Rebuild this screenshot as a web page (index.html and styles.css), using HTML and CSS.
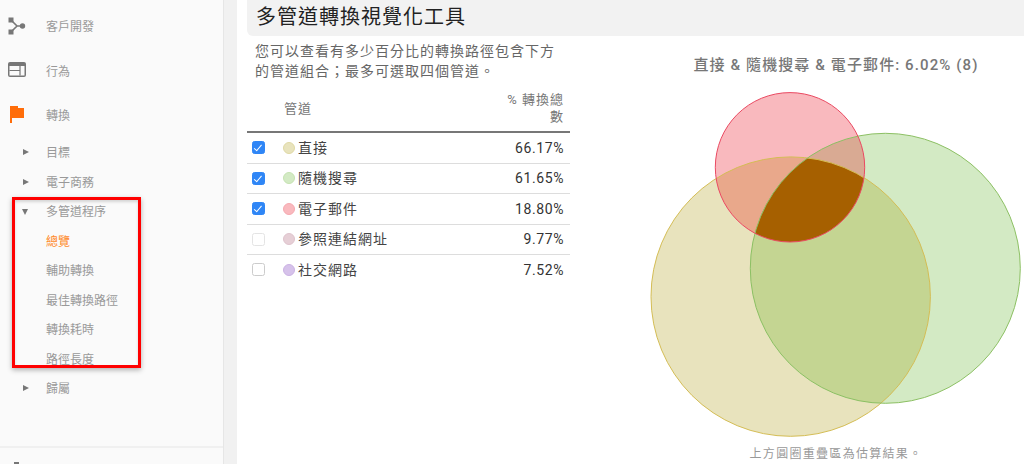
FILE: index.html
```html
<!DOCTYPE html>
<html lang="zh-Hant">
    <head>
        <title>多管道轉換視覺化工具</title>
        <meta charset="UTF-8"/>
        <link rel="stylesheet" href="styles.css">
    </head>
    <body>
        <nav class="sidebar">
            <div class="nav-top">
                <svg class="nav-icon" viewBox="0 0 18 18"><path d="M3 3 L9 9 L3 15 M9 9 H15" fill="none" stroke="#777" stroke-width="1.6"/><rect x="0.5" y="0.5" width="5" height="5" fill="#777"/><rect x="0.5" y="12.5" width="5" height="5" fill="#777"/><circle cx="14.5" cy="9" r="2.7" fill="#777"/></svg>
                <span>客戶開發</span>
            </div>
            <div class="nav-top">
                <svg class="nav-icon" viewBox="0 0 18 16"><rect x="0" y="0" width="18" height="15" rx="2" fill="#777"/><rect x="1.5" y="4" width="15" height="9.5" fill="#fafafa"/><path d="M1.5 8.5 H12 M12 4 V13.5" fill="none" stroke="#777" stroke-width="1.2"/></svg>
                <span>行為</span>
            </div>
            <div class="nav-top">
                <svg class="nav-icon" viewBox="0 0 18 18"><path d="M2 0 H10 V2 H16 V12 H4 V17 H2 Z" fill="#ff6d0a"/></svg>
                <span>轉換</span>
            </div>
            <div class="nav-sub"><i class="arrow"></i>目標</div>
            <div class="nav-sub"><i class="arrow"></i>電子商務</div>
            <div class="nav-sub"><i class="arrow-down"></i>多管道程序</div>
            <div class="nav-sub current">總覽</div>
            <div class="nav-sub">輔助轉換</div>
            <div class="nav-sub">最佳轉換路徑</div>
            <div class="nav-sub">轉換耗時</div>
            <div class="nav-sub">路徑長度</div>
            <div class="nav-sub"><i class="arrow"></i>歸屬</div>
            <div class="nav-footer"><i class="footer-icon"></i></div>
            <div class="red-box"></div>
        </nav>
        <div class="gutter"></div>
        <main class="content">
            <h1 class="title">多管道轉換視覺化工具</h1>
            <div class="columns">
                <section class="left">
                    <p class="desc">您可以查看有多少百分比的轉換路徑包含下方的管道組合；最多可選取四個管道。</p>
                    <table class="channels">
                        <thead>
                            <tr>
                                <th class="col-check"></th>
                                <th class="col-name">管道</th>
                                <th class="col-pct">% 轉換總數</th>
                            </tr>
                        </thead>
                        <tbody>
                            <tr>
                                <td><i class="check on"></i></td>
                                <td class="name"><i class="dot yellow"></i>直接</td>
                                <td class="pct">66.17%</td>
                            </tr>
                            <tr>
                                <td><i class="check on"></i></td>
                                <td class="name"><i class="dot green"></i>隨機搜尋</td>
                                <td class="pct">61.65%</td>
                            </tr>
                            <tr>
                                <td><i class="check on"></i></td>
                                <td class="name"><i class="dot red"></i>電子郵件</td>
                                <td class="pct">18.80%</td>
                            </tr>
                            <tr>
                                <td><i class="check faint"></i></td>
                                <td class="name"><i class="dot mauve"></i>參照連結網址</td>
                                <td class="pct">9.77%</td>
                            </tr>
                            <tr>
                                <td><i class="check"></i></td>
                                <td class="name"><i class="dot purple"></i>社交網路</td>
                                <td class="pct">7.52%</td>
                            </tr>
                        </tbody>
                    </table>
                </section>
                <section class="viz">
                    <h2 class="viz-title">直接 &amp; 隨機搜尋 &amp; 電子郵件: 6.02% (8)</h2>
                    <svg class="venn" viewBox="648 84 376 360">
                        <defs>
                            <clipPath id="clip-y"><circle cx="790.7" cy="296.6" r="139.7"/></clipPath>
                            <clipPath id="clip-g"><circle cx="885.3" cy="268.3" r="135"/></clipPath>
                        </defs>
                        <circle cx="790.7" cy="296.6" r="139.7" fill="#e8e3bd"/>
                        <circle cx="885.3" cy="268.3" r="135" fill="#d3eac4"/>
                        <circle cx="790" cy="167.3" r="74.7" fill="#f9b9be"/>
                        <g clip-path="url(#clip-y)">
                            <circle cx="885.3" cy="268.3" r="135" fill="#c4d592"/>
                            <circle cx="790" cy="167.3" r="74.7" fill="#e9a88b"/>
                        </g>
                        <g clip-path="url(#clip-g)">
                            <circle cx="790" cy="167.3" r="74.7" fill="#d9aa93"/>
                            <g clip-path="url(#clip-y)">
                                <circle cx="790" cy="167.3" r="74.7" fill="#a66000"/>
                            </g>
                        </g>
                        <circle cx="790.7" cy="296.6" r="139.7" fill="none" stroke="#d4bd55"/>
                        <circle cx="885.3" cy="268.3" r="135" fill="none" stroke="#8cc063"/>
                        <circle cx="790" cy="167.3" r="74.7" fill="none" stroke="#ea4a62"/>
                    </svg>
                    <p class="viz-note">上方圓圈重疊區為估算結果。</p>
                </section>
            </div>
        </main>
    </body>
</html>
```

FILE: styles.css
```css
html, body {
    height: 100%;
}

body {
    margin: 0;
    display: flex;
    height: 464px;
    overflow: hidden;
    background: #fff;
    font-family: Roboto, "Noto Sans CJK TC", sans-serif;
    color: #333;
}

/* sidebar */
.sidebar {
    position: relative;
    width: 224px;
    flex: none;
    display: flex;
    flex-direction: column;
    padding-top: 3.5px;
    box-sizing: border-box;
    background: #fafafa;
    border-right: 1px solid #e6e6e6;
    font-size: 12px;
    color: #999;
}

.nav-top {
    height: 44.5px;
    flex: none;
    display: flex;
    align-items: center;
    padding-left: 8px;
}

.nav-top span {
    margin-left: 20px;
}

.nav-icon {
    width: 18px;
    height: 18px;
    flex: none;
}

.nav-sub {
    height: 29.5px;
    flex: none;
    display: flex;
    align-items: center;
    padding-left: 46px;
    position: relative;
}

.nav-sub.current {
    color: #ff8a2b;
}

.arrow {
    position: absolute;
    left: 23px;
    top: 12px;
    border-left: 6px solid #777;
    border-top: 3.5px solid transparent;
    border-bottom: 3.5px solid transparent;
}

.arrow-down {
    position: absolute;
    left: 22px;
    top: 13px;
    border-top: 6px solid #777;
    border-left: 3.5px solid transparent;
    border-right: 3.5px solid transparent;
}

.nav-footer {
    margin-top: auto;
    height: 18px;
    flex: none;
    border-top: 2px solid #f0f0f0;
    box-sizing: border-box;
    padding: 14px 0 0 14px;
}

.footer-icon {
    display: block;
    width: 5px;
    height: 4px;
    background: #777;
}

.red-box {
    position: absolute;
    left: 12px;
    top: 197px;
    width: 129px;
    height: 171px;
    box-sizing: border-box;
    border: 3px solid #f00;
    box-shadow: 0 2px 5px rgba(0, 0, 0, 0.3), inset 0 2px 3px rgba(0, 0, 0, 0.15);
}

.gutter {
    width: 13px;
    flex: none;
    background: #f1f1f1;
}

/* main */
.content {
    flex: 1;
    min-width: 0;
    padding-left: 10px;
}

.title {
    margin: 0;
    height: 36px;
    padding-left: 9px;
    background: #f2f2f2;
    border-bottom-left-radius: 6px;
    font-size: 20px;
    font-weight: 400;
    letter-spacing: 1px;
    line-height: 34px;
    color: #222;
}

.columns {
    display: flex;
}

.left {
    width: 323px;
    flex: none;
}

.desc {
    margin: 6px 0 0;
    padding: 0 8px;
    height: 39px;
    font-size: 14px;
    letter-spacing: 1px;
    line-height: 19.5px;
    color: #666;
}

.channels {
    width: 323px;
    table-layout: fixed;
    border-collapse: separate;
    border-spacing: 0;
}

.channels th {
    height: 52px;
    padding: 0 0 6px;
    box-sizing: border-box;
    border-bottom: 2px solid #777;
    font-size: 13px;
    font-weight: 400;
    letter-spacing: 1px;
    line-height: 17px;
    color: #777;
    text-align: left;
    vertical-align: bottom;
}

.channels th.col-name {
    padding-bottom: 14px;
}

.col-check {
    width: 37px;
}

.channels th.col-pct {
    width: 70px;
    padding-right: 6px;
    text-align: right;
}

.channels td {
    height: 30.5px;
    padding: 0;
    box-sizing: border-box;
    border-bottom: 1px solid #ddd;
    font-size: 14px;
    letter-spacing: 1px;
    color: #444;
}

.channels tr:last-child td {
    border-bottom-color: transparent;
}

.channels td.name {
    padding-bottom: 2px;
}

.channels td.pct {
    padding-right: 6px;
    text-align: right;
    letter-spacing: 0.6px;
    color: #333;
}

.check {
    display: block;
    position: relative;
    width: 13px;
    height: 13px;
    margin-left: 5px;
    box-sizing: border-box;
    border: 1px solid #ccc;
    border-radius: 2.5px;
    background: #fff;
}

.check.faint {
    border-color: #e4e4e4;
}

.check.on {
    border-color: #2f86f6;
    background: #2f86f6;
}

.check.on::after {
    content: "";
    position: absolute;
    left: 2.5px;
    top: 1px;
    width: 3px;
    height: 6.5px;
    border: solid #fff;
    border-width: 0 1.5px 1.5px 0;
    transform: rotate(40deg);
}

.dot {
    display: inline-block;
    width: 12px;
    height: 12px;
    margin: 0 3px 0 -1px;
    box-sizing: border-box;
    border: 1px solid;
    border-radius: 50%;
    vertical-align: -1px;
}

.yellow { background: #e8e3bd; border-color: #e0d9a5; }
.green { background: #d3eac4; border-color: #c6e3b2; }
.red { background: #f9b9be; border-color: #f6a9b0; }
.mauve { background: #e6cfd6; border-color: #dfc4cd; }
.purple { background: #d6c2ea; border-color: #cbb2e4; }

/* venn */
.viz {
    width: 376px;
    margin-left: 78px;
    flex: none;
}

.viz-title {
    margin: 0;
    height: 48px;
    font-size: 15px;
    font-weight: 500;
    letter-spacing: 1.1px;
    line-height: 58px;
    color: #777;
    text-align: center;
}

.venn {
    display: block;
    width: 376px;
    height: 360px;
}

.viz-note {
    margin: 0;
    font-size: 12px;
    letter-spacing: 1.3px;
    line-height: 20px;
    color: #999;
    text-align: center;
}
```
